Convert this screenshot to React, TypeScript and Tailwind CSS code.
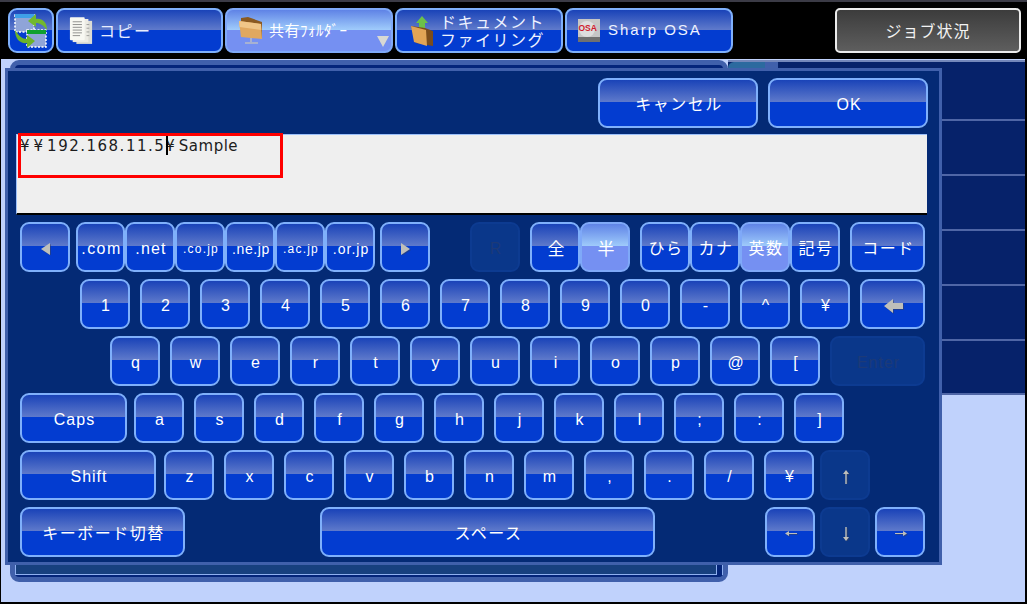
const glossBlue =
  "border-[#7fb0fb] bg-[linear-gradient(#1a43b8_0%,#5f7acb_48%,#033cd0_48%,#033cd0_100%)] text-white";
const glossActive =
  "border-[#7fa9f8] bg-[linear-gradient(#5f83e6_0%,#9fcbfb_48%,#7590f2_48%,#7590f2_100%)] text-white";
const disabledKey = "border-[#0d3b91] bg-[#0a378a] text-[#1c3a78]";

const fontStack = "font-['Liberation_Sans','Noto_Sans_CJK_JP',sans-serif]";
const cjkText = "text-[16px] tracking-[1.5px] pt-[1px]";

type KeyProps = {
  label?: string;
  className?: string;
  textClass?: string;
  active?: boolean;
  disabled?: boolean;
  children?: React.ReactNode;
};

function Key({ label, className = "w-[50px]", textClass = "text-[16px] tracking-[1px]", active, disabled, children }: KeyProps) {
  const look = disabled ? disabledKey : active ? glossActive : glossBlue;
  return (
    <div className={`h-[50px] shrink-0 rounded-[9px] border-2 flex items-center justify-center pl-[2px] pt-[3px] ${look} ${className}`}>
      {children ?? <span className={`${textClass} leading-none whitespace-nowrap`}>{label}</span>}
    </div>
  );
}

function GrayArrow({ d, w = 20, h = 16 }: { d: string; w?: number; h?: number }) {
  return (
    <svg width={w} height={h} viewBox={`0 0 ${w} ${h}`}>
      <path d={d} fill="#3a3f55" opacity="0.5" transform="translate(1 1)" />
      <path d={d} fill="#bfbfba" />
    </svg>
  );
}

function SyncIcon() {
  return (
    <svg width="36" height="40" viewBox="0 0 36 40">
      <rect x="2" y="4" width="19" height="17" fill="#8fa4d8" stroke="#fff" strokeWidth="1.5" strokeDasharray="2 1.5" />
      <rect x="2" y="3" width="19" height="4" fill="#3f9fe8" />
      <rect x="14" y="19" width="19" height="17" fill="#8fa4d8" stroke="#fff" strokeWidth="1.5" strokeDasharray="2 1.5" />
      <rect x="14" y="19" width="19" height="4" fill="#10a030" />
      <path d="M34 19 C34 10 28 7 23 8 L23 3 L15 10 L23 16 L23 12 C27 12 30 14 34 19Z" fill="#72b82e" />
      <path d="M2 19 C2 29 8 33 14 32 L14 37 L22 30 L14 24 L14 28 C9 28 6 25 2 19Z" fill="#6cb32a" />
    </svg>
  );
}

function CopyIcon() {
  return (
    <svg width="24" height="30" viewBox="0 0 26 30">
      <rect x="8" y="4" width="17" height="25" fill="#dcdcd4" />
      <rect x="4" y="2" width="17" height="25" fill="#ecebe4" />
      <rect x="1" y="0" width="16" height="25" rx="1" fill="#f8f8f2" />
      <path d="M4 5h10M4 8h10M4 11h10M4 14h10M4 17h10M4 20h8" stroke="#8a8a88" strokeWidth="1" />
      <path d="M19 8h3M19 12h3M19 16h3M19 20h3" stroke="#9a9a98" strokeWidth="1" />
    </svg>
  );
}

function FolderIcon() {
  return (
    <svg width="26" height="30" viewBox="0 0 26 30">
      <path d="M3 2 L10 1 L24 6 L24 22 L3 20 Z" fill="#8a5a22" />
      <path d="M1 5 L23 8 L24 23 L3 21 Z" fill="#e0a860" />
      <path d="M1 5 L23 8 L23.4 14 L1.5 11 Z" fill="#f0c688" />
      <path d="M13 22v4M7 27h13" stroke="#b8bcc8" strokeWidth="1.5" />
    </svg>
  );
}

function FilingIcon() {
  return (
    <svg width="24" height="32" viewBox="0 0 24 32">
      <path d="M12 1 L18 8 L15 8 L15 15 L9 15 L9 8 L6 8 Z" fill="#6cc04a" />
      <path d="M1 11 L15 13 L23 16 L23 31 L6 28 Z" fill="#7a4c1c" />
      <path d="M1 11 L16 15 L17 31 L4 27 Z" fill="#e2a456" />
    </svg>
  );
}

function OsaIcon() {
  return (
    <svg width="22" height="23" viewBox="0 0 22 23">
      <rect x="0" y="0" width="22" height="23" fill="#c6c6c6" />
      <circle cx="9" cy="10" r="8" fill="#dedede" />
      <text x="0.5" y="12" fontSize="8.5" fontWeight="700" fill="#d01c2c" fontFamily="Liberation Sans">OSA</text>
      <rect x="0" y="18" width="22" height="5" fill="#707070" />
    </svg>
  );
}

function NavButton({ icon, active, className, children }: { icon: React.ReactNode; active?: boolean; className: string; children: React.ReactNode }) {
  return (
    <div className={`h-[45px] rounded-[8px] border-2 flex items-center relative ${active ? glossActive : glossBlue} ${className}`}>
      {icon}
      {children}
    </div>
  );
}

const numberRow = ["1", "2", "3", "4", "5", "6", "7", "8", "9", "0", "-", "^", "¥"];
const qRow = ["q", "w", "e", "r", "t", "y", "u", "i", "o", "p", "@", "["];
const aRow = ["a", "s", "d", "f", "g", "h", "j", "k", "l", ";", ":", "]"];
const zRow = ["z", "x", "c", "v", "b", "n", "m", ",", ".", "/", "¥"];
const lines = ["h-[55px]", "h-[55px]", "h-[55px]", "h-[55px]", "h-[54px]"];

export default function App() {
  return (
    <div className={`w-[1027px] h-[604px] overflow-hidden flex flex-col bg-black relative ${fontStack}`}>
      {/* top bar */}
      <div className="h-[59px] shrink-0 border-t-2 border-[#3b3b46] bg-black flex items-start pt-[6px] pl-[8px] pr-[6px]">
        <div className={`w-[46px] h-[45px] rounded-[9px] border-2 flex items-center justify-center mr-[2px] ${glossBlue}`}>
          <SyncIcon />
        </div>
        <div className="flex gap-[2px]">
          <NavButton className="w-[167px] pl-[11px]" icon={<CopyIcon />}>
            <span className="ml-[6px] pt-[2px] text-[16px] tracking-[1.5px] text-[#e8eeff]">コピー</span>
          </NavButton>
          <NavButton className="w-[168px] pl-[11px]" active icon={<FolderIcon />}>
            <span className="ml-[5px] pt-[2px] text-[15px] tracking-[0.5px]">共有ﾌｫﾙﾀﾞｰ</span>
            <svg className="absolute right-[2px] bottom-[4px]" width="12" height="12" viewBox="0 0 12 12">
              <path d="M0 1H12L6 12Z" fill="#d8d8d4" />
            </svg>
          </NavButton>
          <NavButton className="w-[168px] pl-[13px]" icon={<FilingIcon />}>
            <div className="ml-[6px] pt-[2px] flex flex-col items-center text-[16px] leading-[18px] tracking-[1.5px] text-[#eef2ff]">
              <span>ドキュメント</span>
              <span>ファイリング</span>
            </div>
          </NavButton>
          <NavButton className="w-[168px] pl-[11px]" icon={<OsaIcon />}>
            <span className="ml-[8px] text-[15px] tracking-[2px] text-[#eef2ff]">Sharp OSA</span>
          </NavButton>
        </div>
        <div className="ml-auto w-[186px] h-[45px] pt-[2px] rounded-[5px] border-2 border-[#ececec] bg-[linear-gradient(#3c3c3c,#5e5e5e)] flex items-center justify-center text-[16px] tracking-[1px] text-[#f2f2f2]">
          ジョブ状況
        </div>
      </div>

      {/* screen behind the keyboard */}
      <div className="flex-1 min-h-0 flex items-start bg-[#c0d2fc] border-l border-black border-r-2 border-b-2 pl-[9px] pt-[1px]">
        <div className="w-[718px] h-[522px] shrink-0 rounded-[9px] border-[5px] border-[#4060ab] bg-[#04257a] flex">
          <div className="flex-1 mt-[4px] mb-[2px] border border-[#8fb0f0] bg-[#17407f]" />
          <div className="w-[5px] mt-[4px] mb-[2px] ml-[1px] border-r border-[#8fb0f0]" />
        </div>
        <div className="flex-1 flex flex-col bg-[#06226a] border-t-2 border-[#7488bb]">
          <div className="h-[59px] border-b-2 border-[#4f66a6]">
            <div className="w-[50px] h-[7px] rounded-tl-[6px] bg-[linear-gradient(to_right,#2c6a9f_75%,#4060ab_75%)]" />
          </div>
          {lines.map((h, i) => (
            <div key={i} className={`${h} border-b-2 border-[#4f66a6]`} />
          ))}
        </div>
      </div>

      {/* keyboard dialog */}
      <div className="absolute left-[5px] top-[68px] w-[937px] h-[497px] border-[3px] border-[#4060ab] bg-[#042a75] pl-[12px] flex flex-col">
        <div className="flex justify-end gap-[10px] pt-[7px] pr-[11px]">
          <Key label="キャンセル" className="w-[160px]" textClass={cjkText} />
          <Key label="OK" className="w-[160px]" />
        </div>

        <div className="relative mt-[6px] -ml-[4px] w-[911px] h-[81px] shrink-0 bg-[#efefef] border-t border-l border-[#9cc0fa] border-b-2 border-b-black pl-[3px] pt-[2px] font-['DejaVu_Sans',sans-serif] text-[15px] leading-[18px] text-[#1c1c1c] whitespace-nowrap">
          <span className="tracking-[4px]">¥¥</span>
          <span className="tracking-[1.5px]">192.168.11.5</span>
          <span className="tracking-[4px]">¥</span>
          <span className="tracking-[0.5px]">Sample</span>
          <div className="absolute left-[149px] top-0 w-[2px] h-[20px] bg-black" />
          <div className="absolute left-[1px] -top-[2px] w-[265px] h-[45px] border-[3px] border-[#ff0000]" />
        </div>

        <div className="flex mt-[7px]">
          <Key>
            <GrayArrow w={10} h={12} d="M0 6 L9 0 L9 12 Z" />
          </Key>
          <div className="flex ml-[6px]">
            <Key label=".com" className="w-[49px]" textClass="text-[16px] tracking-[1.4px]" />
            <Key label=".net" className="w-[50px]" textClass="text-[16px] tracking-[1.2px]" />
            <Key label=".co.jp" className="w-[50px]" textClass="text-[12px] tracking-[1.2px]" />
            <Key label=".ne.jp" className="w-[50px]" textClass="text-[14px] tracking-[0.6px]" />
            <Key label=".ac.jp" className="w-[50px]" textClass="text-[12px] tracking-[1.2px]" />
            <Key label=".or.jp" className="w-[50px]" textClass="text-[14px] tracking-[1px]" />
          </div>
          <Key className="w-[50px] ml-[5px]">
            <GrayArrow w={10} h={12} d="M9 6 L0 0 L0 12 Z" />
          </Key>
          <Key label="R" className="w-[50px] ml-[40px]" disabled />
          <div className="flex ml-[10px]">
            <Key label="全" textClass="text-[17px] pt-[1px]" />
            <Key label="半" textClass="text-[17px] pt-[1px]" active />
          </div>
          <div className="flex ml-[10px]">
            <Key label="ひら" textClass={cjkText} />
            <Key label="カナ" textClass={cjkText} />
            <Key label="英数" textClass={cjkText} active />
            <Key label="記号" textClass={cjkText} />
          </div>
          <Key label="コード" className="w-[75px] ml-[10px]" textClass={cjkText} />
        </div>

        <div className="flex gap-[10px] mt-[7px] ml-[60px]">
          {numberRow.map((k, i) => (
            <Key key={i} label={k} />
          ))}
          <Key className="w-[65px]">
            <GrayArrow w={20} h={16} d="M0 8 L9 1 L9 5 L19 5 L19 11 L9 11 L9 15 Z" />
          </Key>
        </div>

        <div className="flex gap-[10px] mt-[7px] ml-[90px]">
          {qRow.map((k) => (
            <Key key={k} label={k} />
          ))}
          <Key label="Enter" className="w-[95px]" disabled />
        </div>

        <div className="flex mt-[7px]">
          <Key label="Caps" className="w-[107px]" />
          <div className="flex gap-[10px] ml-[7px]">
            {aRow.map((k) => (
              <Key key={k} label={k} />
            ))}
          </div>
        </div>

        <div className="flex mt-[7px]">
          <Key label="Shift" className="w-[136px]" />
          <div className="flex gap-[10px] ml-[8px]">
            {zRow.map((k, i) => (
              <Key key={i} label={k} />
            ))}
          </div>
          <Key className="w-[50px] ml-[6px]" disabled>
            <GrayArrow w={9} h={14} d="M4 0 L7 4 L4.7 4 L4.7 14 L3.3 14 L3.3 4 L1 4 Z" />
          </Key>
        </div>

        <div className="flex mt-[7px]">
          <Key label="キーボード切替" className="w-[165px]" textClass={cjkText} />
          <Key label="スペース" className="w-[335px] ml-[135px]" textClass={cjkText} />
          <Key className="w-[50px] ml-[110px]">
            <GrayArrow w={13} h={8} d="M0 3.5 L4 1 L4 3 L12 3 L12 4 L4 4 L4 6 Z" />
          </Key>
          <Key className="w-[50px] ml-[5px]" disabled>
            <GrayArrow w={9} h={14} d="M4 14 L7 10 L4.7 10 L4.7 0 L3.3 0 L3.3 10 L1 10 Z" />
          </Key>
          <Key className="w-[50px] ml-[5px]">
            <GrayArrow w={13} h={8} d="M12 3.5 L8 1 L8 3 L0 3 L0 4 L8 4 L8 6 Z" />
          </Key>
        </div>
      </div>
    </div>
  );
}
